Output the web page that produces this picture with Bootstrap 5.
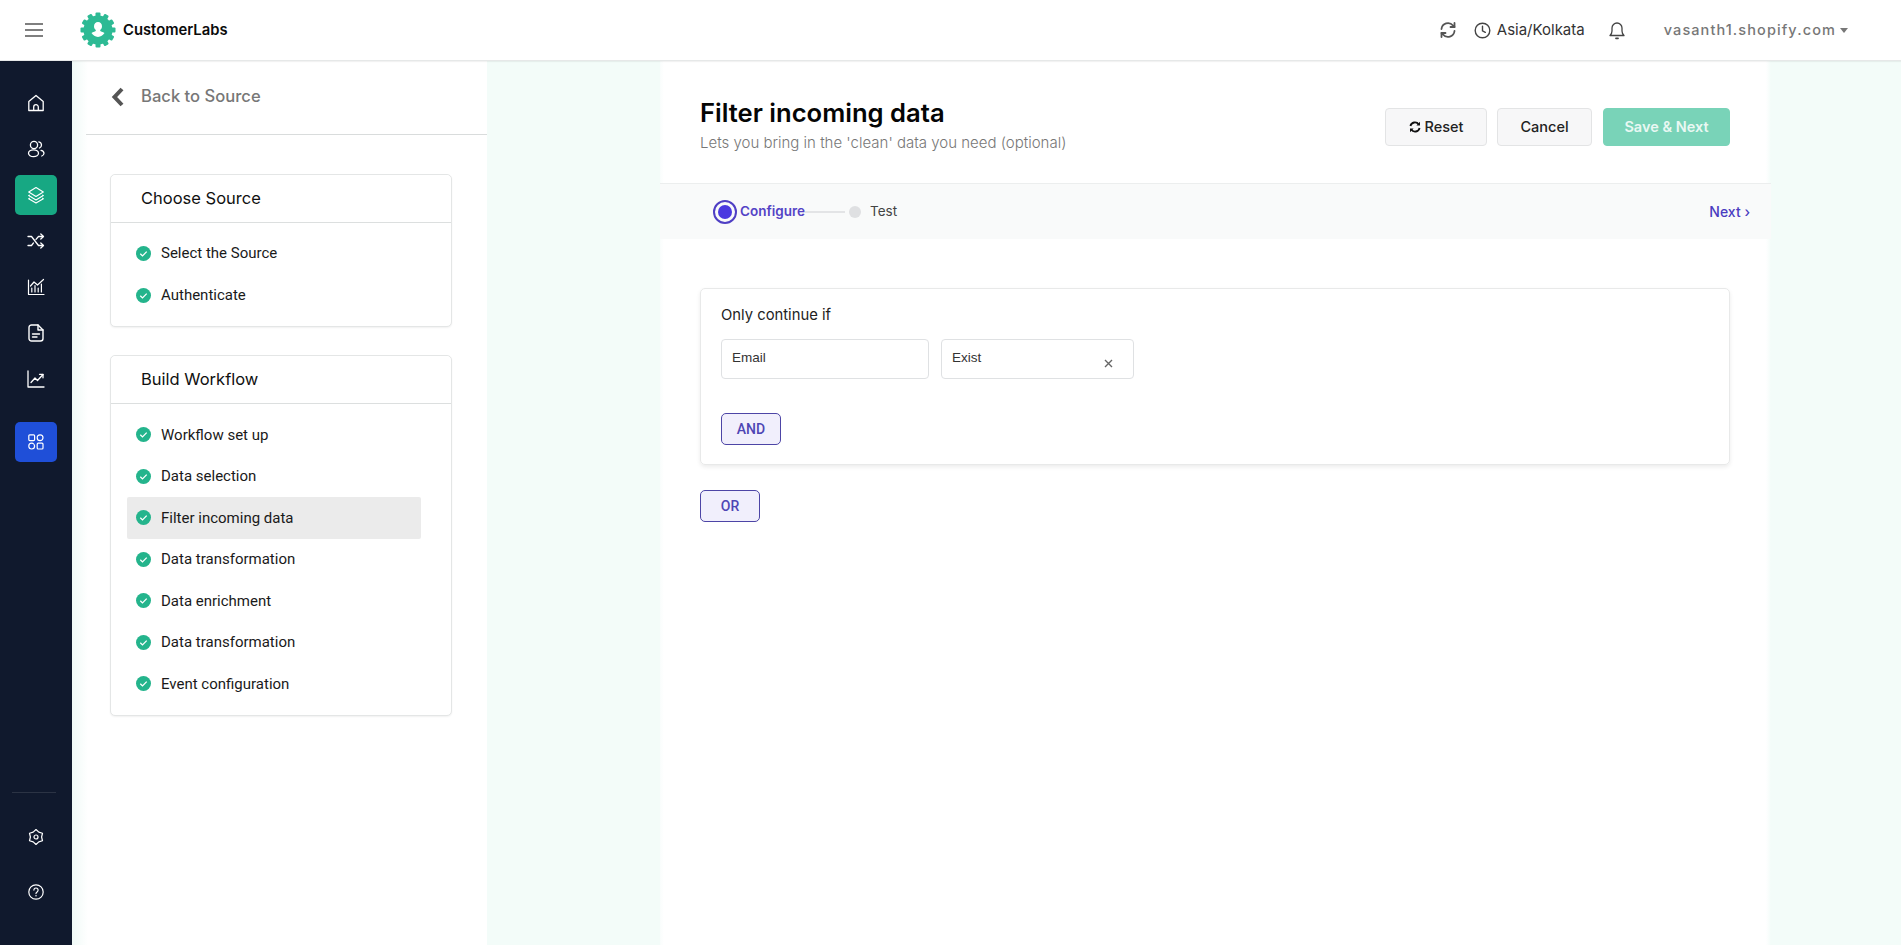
<!DOCTYPE html>
<html lang="en">
<head>
  <meta charset="UTF-8">
  <title>CustomerLabs - Filter incoming data</title>
  <link href="https://cdn.jsdelivr.net/npm/bootstrap@5.3.0/dist/css/bootstrap.min.css" rel="stylesheet">
  <style>
    html, body { height: 100%; }
    body { font-family: Inter, "Noto Sans", sans-serif; overflow: hidden; background: #f3fcf9; color: #111; }
    svg { display: block; }
    .top-bar { height: 61px; background: #fff; border-bottom: 1px solid #e6e8e8; box-shadow: 0 1px 1px rgba(0,0,0,.05); padding-left: 25px; padding-right: 53px; flex: none; position: relative; z-index: 2; }
    .burger { width: 18px; margin-right: 37px; }
    .logo-text { font-size: 14.8px; font-weight: 600; color: #0b0b0b; margin-left: 7px; }
    .tz-text { font-size: 15px; color: #333; margin-left: 6px; margin-right: 24px; }
    .shop-name { font-size: 14.5px; font-weight: 500; color: #777; letter-spacing: 1.1px; margin-left: 39px; }
    .caret-mark { width: 0; height: 0; border-left: 4.5px solid transparent; border-right: 4.5px solid transparent; border-top: 5px solid #777; margin-left: 4px; }

    .page-body { height: 884px; }
    .side-rail { width: 72px; background: #10192d; flex: none; padding-top: 19px; padding-bottom: 26px; }
    .rail-item { width: 42px; height: 46px; color: #fff; margin-left: 15px; }
    .rail-tile { height: 40px; margin-top: 3px; margin-bottom: 3px; border-radius: 5px; }
    .tile-green { background: #17a883; }
    .tile-blue { background: #1f4fd8; margin-top: 20px; }
    .rail-rule { height: 1px; background: #2b3344; margin: 0 16px 16px 12px; }
    .rail-gap { height: 55px; }

    .left-pane { width: 415px; flex: none; background: linear-gradient(90deg, #f0faf7 0, #fff 16px); }
    .back-row { height: 74px; margin-left: 14px; border-bottom: 1px solid #d9dcdc; padding-left: 25px; padding-bottom: 2px; }
    .back-text { font-size: 16.6px; font-weight: 500; color: #777; margin-left: 16px; }
    .step-card { width: 342px; margin-left: 38px; border: 1px solid #e4e6e6; border-radius: 5px; box-shadow: 0 1px 2px rgba(0,0,0,.06); }
    .step-card .card-header { background: #fff; padding: 0 0 0 30px; height: 48px; line-height: 47px; font-size: 16.5px; font-weight: 400; color: #111; border-bottom: 1px solid #dcdfdf; }
    .first-card { margin-top: 39px; height: 153px; }
    .second-card { margin-top: 28px; height: 361px; }
    .step-list { padding: 9px 0 0 15.5px; }
    .second-card .step-list { padding-top: 10px; }
    .step-row { height: 41.5px; width: 294px; padding-left: 9.5px; font-family: Roboto, sans-serif; font-size: 15px; color: #1a1a1a; gap: 10px; }
    .first-card .step-row { height: 42px; }
    .step-row svg { flex: none; }
    .step-on { background: #ebebeb; border-radius: 2px; }

    .mint-pane { padding-left: 173px; padding-right: 130px; }
    .main-sheet { background: linear-gradient(90deg, #f9fdfc 0, #fff 4px, #fff calc(100% - 5px), #f3fcf9 100%); height: 100%; }
    .sheet-head { height: 123px; padding: 34px 41px 0 40px; border-bottom: 1px solid #eceeee; }
    .sheet-title { font-size: 25.6px; font-weight: 600; color: #050505; line-height: 36px; margin: 0; }
    .sheet-sub { font-size: 15px; font-weight: 300; color: #777; line-height: 20px; margin-top: 2px; }
    .head-actions { padding-top: 13px; }
    .act-btn { height: 38px; font-size: 14.5px; font-family: Inter, sans-serif; font-weight: 500; color: #222; background: #f7f7f8; border: 1px solid #e3e4e5; border-radius: 4px; padding: 0; }
    .act-reset { width: 102px; margin-right: 10px; }
    .act-cancel { width: 95px; margin-right: 11px; }
    .act-save { width: 127px; background: #79d3b8; border-color: #79d3b8; color: #e9f8f3; font-weight: 600; }
    .stepper-bar { height: 55px; background: #f9fafa; padding: 0 21px 0 53px; }
    .stepper-on { width: 24px; height: 24px; border: 2px solid #4f3fc4; border-radius: 50%; }
    .stepper-on i { display: block; width: 14px; height: 14px; border-radius: 50%; background: #4a38e0; }
    .stepper-text { font-size: 13.5px; font-weight: 600; color: #5443c6; margin-left: 3px; }
    .stepper-line { width: 40px; height: 2px; background: #e3e4e6; }
    .stepper-dot { width: 12px; height: 12px; border-radius: 50%; background: #dfe0e2; margin-left: 4px; }
    .stepper-test { font-size: 13.5px; color: #444; margin-left: 9px; }
    .next-link { font-size: 14px; font-weight: 500; color: #4a3cc0; text-decoration: none; }
    .rule-zone { padding: 49px 41px 0 40px; }
    .rule-card { height: 177px; border: 1px solid #e8e9e9; border-radius: 5px; box-shadow: 0 2px 4px rgba(0,0,0,.08); padding: 14px 20px; }
    .rule-label { font-size: 14.8px; font-weight: 400; color: #222; line-height: 24px; margin-bottom: 12px; }
    .rule-box { height: 40px; border: 1px solid #dfe1e3; border-radius: 4px; font-family: "Liberation Sans", sans-serif; font-size: 13.5px; color: #333; padding: 8px 10px; background: #fff; line-height: 20px; }
    .rule-email { width: 208px; margin-right: 12px; }
    .rule-exist { width: 193px; }
    .rule-x { color: #666; margin-top: 11px; margin-right: 10px; }
    .join-btn { width: 60px; height: 32px; padding: 0; font-family: Roboto, sans-serif; font-size: 14px; font-weight: 500; color: #4e46b4; background: #f1effc; border: 1px solid #4d45a6; border-radius: 5px; }
    .rule-card .join-btn { margin-top: 34px; display: block; }
    .or-btn { margin-top: 25px; display: block; }
  </style>
</head>
<body class="d-flex flex-column">

  <header class="top-bar d-flex align-items-center">
    <svg class="burger" width="18" height="14" viewBox="0 0 18 14"><path d="M0 1h18M0 7h18M0 13h18" stroke="#555" stroke-width="1.6"/></svg>
    <svg width="36" height="36" viewBox="0 0 36 36">
      <g fill="#2dba94">
        <circle cx="18" cy="18" r="14.5"/>
        <rect x="15.5" y="0.5" width="5" height="6" rx="1"/>
        <rect x="15.5" y="0.5" width="5" height="6" rx="1" transform="rotate(30 18 18)"/>
        <rect x="15.5" y="0.5" width="5" height="6" rx="1" transform="rotate(60 18 18)"/>
        <rect x="15.5" y="0.5" width="5" height="6" rx="1" transform="rotate(90 18 18)"/>
        <rect x="15.5" y="0.5" width="5" height="6" rx="1" transform="rotate(120 18 18)"/>
        <rect x="15.5" y="0.5" width="5" height="6" rx="1" transform="rotate(150 18 18)"/>
        <rect x="15.5" y="0.5" width="5" height="6" rx="1" transform="rotate(180 18 18)"/>
        <rect x="15.5" y="0.5" width="5" height="6" rx="1" transform="rotate(210 18 18)"/>
        <rect x="15.5" y="0.5" width="5" height="6" rx="1" transform="rotate(240 18 18)"/>
        <rect x="15.5" y="0.5" width="5" height="6" rx="1" transform="rotate(270 18 18)"/>
        <rect x="15.5" y="0.5" width="5" height="6" rx="1" transform="rotate(300 18 18)"/>
        <rect x="15.5" y="0.5" width="5" height="6" rx="1" transform="rotate(330 18 18)"/>
      </g>
      <path fill="#fff" d="M18 10c2.400 0 4 1.900 4 4.200 0 1.600-.7 3-1.800 3.800v.8c0 .7 2.800 1 4.300 2.200A8.800 8.800 0 0 1 18 25a8.800 8.800 0 0 1-6.500-4c1.500-1.200 4.300-1.500 4.300-2.200V18c-1.100-.8-1.800-2.200-1.800-3.800 0-2.300 1.600-4.200 4-4.200z"/>
    </svg>
    <span class="logo-text">CustomerLabs</span>

    <div class="ms-auto d-flex align-items-center">
      <svg class="me-3" width="20" height="20" viewBox="0 0 20 20" fill="none" stroke="#555" stroke-width="1.8" stroke-linecap="round" stroke-linejoin="round">
        <path d="M3.500 9a6.500 6.500 0 0 1 11.500-3.500L16.500 7"/><path d="M16.500 3v4h-4"/>
        <path d="M16.500 11a6.500 6.500 0 0 1-11.500 3.500L3.500 13"/><path d="M3.500 17v-4h4"/>
      </svg>
      <svg width="17" height="17" viewBox="0 0 17 17" fill="none" stroke="#444" stroke-width="1.4" stroke-linecap="round"><circle cx="8.5" cy="8.5" r="7.3"/><path d="M8.500 4.300v4.500l2.800 1.500"/></svg>
      <span class="tz-text">Asia/Kolkata</span>
      <svg width="16" height="19" viewBox="0 0 16 19" fill="none" stroke="#444" stroke-width="1.3" stroke-linecap="round" stroke-linejoin="round"><path d="M1 14.500c1.300-1.200 2-2.200 2-4.500V7a5 5 0 0 1 10 0v3c0 2.300.7 3.300 2 4.500z"/><path d="M7 17.300h2" stroke-width="1.800"/></svg>
      <span class="shop-name">vasanth1.shopify.com</span>
      <span class="caret-mark"></span>
    </div>
  </header>

  <div class="page-body d-flex">
    <nav class="side-rail d-flex flex-column">
      <a class="rail-item d-flex align-items-center justify-content-center">
        <svg width="18" height="18" viewBox="0 0 18 18" fill="none" stroke="#fff" stroke-width="1.3" stroke-linejoin="round"><path d="M1.800 7.600 9 1.500l7.200 6.100V16.500H1.800z"/><path d="M6.700 16.500v-3.500a2.300 2.300 0 0 1 4.600 0v3.500"/></svg>
      </a>
      <a class="rail-item d-flex align-items-center justify-content-center">
        <svg width="18" height="18" viewBox="0 0 18 18" fill="none" stroke="#fff" stroke-width="1.3" stroke-linecap="round"><circle cx="7" cy="5" r="3.6"/><ellipse cx="6.5" cy="13.3" rx="5" ry="3.4"/><path d="M11.800 1.800a3.400 3.400 0 0 1 2.700 3.200 3.300 3.300 0 0 1-2 3M14 10.300a3.500 3.500 0 0 1 3 2.900 3.300 3.300 0 0 1-2.200 2.800"/></svg>
      </a>
      <a class="rail-item rail-tile tile-green d-flex align-items-center justify-content-center">
        <svg width="18" height="18" viewBox="0 0 18 18" fill="none" stroke="#fff" stroke-width="1.2" stroke-linejoin="round"><path d="M9 1.600 16.300 6 9 10.400 1.700 6z"/><path d="M2.800 9 1.700 9.500 9 13.900l7.300-4.400L15.200 9"/><path d="M2.800 12.100l-1.100.6L9 17l7.300-4.300-1.100-.6"/></svg>
      </a>
      <a class="rail-item d-flex align-items-center justify-content-center">
        <svg width="18" height="18" viewBox="0 0 18 18" fill="none" stroke="#fff" stroke-width="1.3" stroke-linecap="round" stroke-linejoin="round"><path d="M1 4.500h3.500l7 9H16"/><path d="M1 13.500h3.500l2-2.600M9 7.400l2.500-2.900H16"/><path d="M13.800 2l2.700 2.500L13.800 7M13.800 11l2.700 2.500-2.700 2.500"/></svg>
      </a>
      <a class="rail-item d-flex align-items-center justify-content-center">
        <svg width="18" height="18" viewBox="0 0 18 18" fill="none" stroke="#fff" stroke-width="1.2" stroke-linecap="round" stroke-linejoin="round"><path d="M1.500 2v14.500h15.500"/><path d="M4.800 14v-4M8 14V7.500M11.200 14v-4M14.400 14V6"/><path d="M3.500 8 7 4l3.500 3L16.500 1.500"/></svg>
      </a>
      <a class="rail-item d-flex align-items-center justify-content-center">
        <svg width="16" height="18" viewBox="0 0 16 18" fill="none" stroke="#fff" stroke-width="1.4" stroke-linecap="round" stroke-linejoin="round"><path d="M4 1h6l5 5v8.500a2.500 2.500 0 0 1-2.500 2.500H3.500A2.500 2.500 0 0 1 1 14.500v-11A2.500 2.500 0 0 1 4 1z"/><path d="M10 1v5h5M4.500 10h7M4.500 13h4.500"/></svg>
      </a>
      <a class="rail-item d-flex align-items-center justify-content-center">
        <svg width="18" height="18" viewBox="0 0 18 18" fill="none" stroke="#fff" stroke-width="1.3" stroke-linecap="round" stroke-linejoin="round"><path d="M1 1v16h16"/><path d="M4 12.500 8 8l2.500 2.500L16 4.500"/><path d="M12.500 4.300H16v3.500"/></svg>
      </a>
      <a class="rail-item rail-tile tile-blue d-flex align-items-center justify-content-center">
        <svg width="16" height="16" viewBox="0 0 16 16" fill="none" stroke="#fff" stroke-width="1.2"><rect x=".8" y=".8" width="5.800" height="5.800" rx="1"/><circle cx="12.1" cy="3.700" r="2.900"/><circle cx="3.700" cy="12.100" r="2.900"/><rect x="9.200" y="9.200" width="5.800" height="5.800" rx="1"/></svg>
      </a>
      <div class="mt-auto rail-rule"></div>
      <a class="rail-item rail-gap d-flex align-items-center justify-content-center">
        <svg width="16" height="16" viewBox="0 0 16 16" fill="none" stroke="#fff" stroke-width="1.2" stroke-linejoin="round"><path d="M8 .5 10.800 3.150 14.500 4.250 13.600 8 14.500 11.750 10.800 12.850 8 15.500 5.200 12.850 1.500 11.750 2.400 8 1.500 4.250 5.200 3.150z"/><circle cx="8" cy="8" r="2"/></svg>
      </a>
      <a class="rail-item rail-gap d-flex align-items-center justify-content-center">
        <svg width="16" height="16" viewBox="0 0 16 16" fill="none" stroke="#fff" stroke-width="1.2" stroke-linecap="round"><circle cx="8" cy="8" r="7.2"/><path d="M5.900 6.100a2.100 2.100 0 1 1 3.200 1.800C8.400 8.400 8 8.800 8 9.600"/><path d="M8 11.700v.1" stroke-width="1.500"/></svg>
      </a>
    </nav>

    <aside class="left-pane">
      <div class="back-row d-flex align-items-center">
        <svg width="14" height="20" viewBox="0 0 14 20" fill="none" stroke="#555" stroke-width="4" stroke-linejoin="miter"><path d="M11 2 3.500 10l7.500 8"/></svg>
        <span class="back-text">Back to Source</span>
      </div>

      <div class="card step-card first-card">
        <div class="card-header">Choose Source</div>
        <div class="step-list">
          <div class="step-row d-flex align-items-center"><svg width="15" height="15" viewBox="0 0 15 15"><circle cx="7.5" cy="7.5" r="7.5" fill="#24b48c"/><path d="M4.300 7.800l2.200 2.100 4.200-4.300" fill="none" stroke="#fff" stroke-width="1.3"/></svg>Select the Source</div>
          <div class="step-row d-flex align-items-center"><svg width="15" height="15" viewBox="0 0 15 15"><circle cx="7.5" cy="7.5" r="7.5" fill="#24b48c"/><path d="M4.300 7.800l2.200 2.100 4.200-4.300" fill="none" stroke="#fff" stroke-width="1.3"/></svg>Authenticate</div>
        </div>
      </div>

      <div class="card step-card second-card">
        <div class="card-header">Build Workflow</div>
        <div class="step-list">
          <div class="step-row d-flex align-items-center"><svg width="15" height="15" viewBox="0 0 15 15"><circle cx="7.5" cy="7.5" r="7.5" fill="#24b48c"/><path d="M4.300 7.800l2.200 2.100 4.200-4.300" fill="none" stroke="#fff" stroke-width="1.3"/></svg>Workflow set up</div>
          <div class="step-row d-flex align-items-center"><svg width="15" height="15" viewBox="0 0 15 15"><circle cx="7.5" cy="7.5" r="7.5" fill="#24b48c"/><path d="M4.300 7.800l2.200 2.100 4.200-4.300" fill="none" stroke="#fff" stroke-width="1.3"/></svg>Data selection</div>
          <div class="step-row step-on d-flex align-items-center"><svg width="15" height="15" viewBox="0 0 15 15"><circle cx="7.5" cy="7.5" r="7.5" fill="#24b48c"/><path d="M4.300 7.800l2.200 2.100 4.200-4.300" fill="none" stroke="#fff" stroke-width="1.3"/></svg>Filter incoming data</div>
          <div class="step-row d-flex align-items-center"><svg width="15" height="15" viewBox="0 0 15 15"><circle cx="7.5" cy="7.5" r="7.5" fill="#24b48c"/><path d="M4.300 7.800l2.200 2.100 4.200-4.300" fill="none" stroke="#fff" stroke-width="1.3"/></svg>Data transformation</div>
          <div class="step-row d-flex align-items-center"><svg width="15" height="15" viewBox="0 0 15 15"><circle cx="7.5" cy="7.5" r="7.5" fill="#24b48c"/><path d="M4.300 7.800l2.200 2.100 4.200-4.300" fill="none" stroke="#fff" stroke-width="1.3"/></svg>Data enrichment</div>
          <div class="step-row d-flex align-items-center"><svg width="15" height="15" viewBox="0 0 15 15"><circle cx="7.5" cy="7.5" r="7.5" fill="#24b48c"/><path d="M4.300 7.800l2.200 2.100 4.200-4.300" fill="none" stroke="#fff" stroke-width="1.3"/></svg>Data transformation</div>
          <div class="step-row d-flex align-items-center"><svg width="15" height="15" viewBox="0 0 15 15"><circle cx="7.5" cy="7.5" r="7.5" fill="#24b48c"/><path d="M4.300 7.800l2.200 2.100 4.200-4.300" fill="none" stroke="#fff" stroke-width="1.3"/></svg>Event configuration</div>
        </div>
      </div>
    </aside>

    <div class="mint-pane flex-grow-1">
      <main class="main-sheet">
        <div class="sheet-head d-flex align-items-start justify-content-between">
          <div>
            <h1 class="sheet-title">Filter incoming data</h1>
            <div class="sheet-sub">Lets you bring in the 'clean' data you need (optional)</div>
          </div>
          <div class="d-flex head-actions">
            <button class="btn act-btn act-reset d-flex align-items-center justify-content-center gap-1">
              <svg width="12" height="12" viewBox="0 0 12 12" fill="none" stroke="#111" stroke-width="1.8"><path d="M1.400 5a4.700 4.700 0 0 1 8.400-1.600M10.600 7a4.700 4.700 0 0 1-8.400 1.600"/><path d="M11 .8v3.600H7.400M1 11.200V7.600h3.600" fill="#111" stroke="none"/></svg>
              Reset
            </button>
            <button class="btn act-btn act-cancel">Cancel</button>
            <button class="btn act-btn act-save">Save &amp; Next</button>
          </div>
        </div>

        <div class="stepper-bar d-flex align-items-center">
          <span class="stepper-on d-flex align-items-center justify-content-center"><i></i></span>
          <span class="stepper-text">Configure</span>
          <span class="stepper-line"></span>
          <span class="stepper-dot"></span>
          <span class="stepper-test">Test</span>
          <a class="next-link ms-auto" href="#">Next &rsaquo;</a>
        </div>

        <div class="rule-zone">
          <div class="rule-card">
            <div class="rule-label">Only continue if</div>
            <div class="d-flex">
              <div class="rule-box rule-email">Email</div>
              <div class="rule-box rule-exist d-flex justify-content-between">
                <span>Exist</span>
                <svg class="rule-x" width="9" height="9" viewBox="0 0 9 9" stroke="#666" stroke-width="1.4"><path d="M1 1l7 7M8 1 1 8"/></svg>
              </div>
            </div>
            <button class="btn join-btn">AND</button>
          </div>
          <button class="btn join-btn or-btn">OR</button>
        </div>
      </main>
    </div>
  </div>

  <script src="https://cdn.jsdelivr.net/npm/bootstrap@5.3.0/dist/js/bootstrap.bundle.min.js"></script>
</body>
</html>
